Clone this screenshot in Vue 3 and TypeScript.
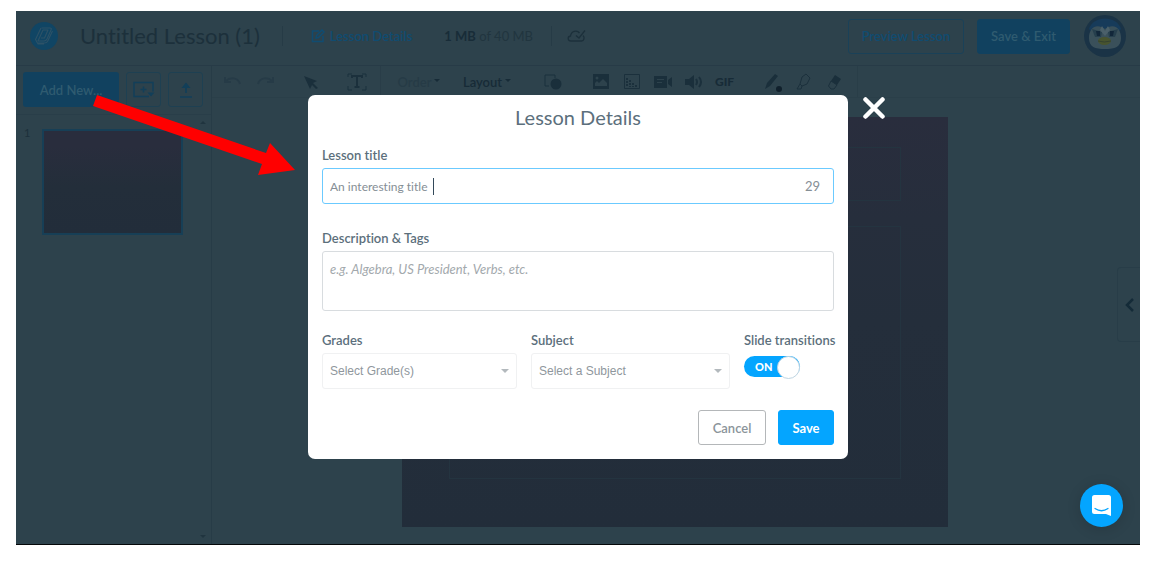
<script setup lang="ts">
import { ref } from 'vue'

const title = ref('An interesting title')
const description = ref('')
const transitions = ref(true)
</script>

<template>
  <div class="stage">
    <div class="editor">
      <header class="topbar">
        <svg class="logo" viewBox="0 0 28 28" aria-hidden="true">
          <circle cx="14" cy="14" r="14" fill="#104564" />
          <g fill="none" stroke="#2d5267" stroke-width="1.1" stroke-linejoin="round">
            <path d="M11.500 6H20q2 0 1 2l-4 9q-1 2-3 2H8L13 8h5l-3.500 8H11" />
            <path d="M22.500 9l-5 10.500q-1 1.500-3 1.500H7.500M11 6L5.500 17.500 8 22h6" />
          </g>
        </svg>
        <h1>Untitled Lesson (1)</h1>
        <span class="rule"></span>
        <a href="#" class="details">
          <svg viewBox="0 0 14 14" width="14" height="14" fill="none" stroke="currentColor" stroke-width="1.500">
            <path d="M12 7v5.500H1.500V2H8" />
            <path d="M5 9l.500-2.500L11 1l2 2-5.500 5.500z" />
          </svg>
          Lesson Details
        </a>
        <span class="usage"><b>1 MB</b> of 40 MB</span>
        <span class="rule usage-rule"></span>
        <svg class="cloud" viewBox="0 0 19 14" fill="none" stroke="#1c303b" stroke-width="1.300">
          <path d="M16 6.500c2 2 1 5.500-1.500 5.500H4C.5 12 .2 7.500 3.500 7 4 2 10 .5 12.500 4" />
          <path d="M9 6.500L12 9l6-7.500" />
        </svg>
        <button class="preview" type="button">Preview Lesson</button>
        <button class="exit" type="button">Save &amp; Exit</button>
        <svg class="avatar" viewBox="0 0 42 42" role="img" aria-label="Profile">
          <circle cx="21" cy="21" r="21" fill="#1a3346" />
          <path d="M5 14C9 0 33 0 37 14l-4 4H9z" fill="#173b5a" />
          <path d="M21 14C13 8 5 12 5 23c0 9 6 11 16 11s16-2 16-11c0-11-8-15-16-9z" fill="#3a505a" />
          <path d="M8 14l10 3-1 5h-6zM34 14l-10 3 1 5h6z" fill="#263f4d" />
          <path d="M18 11l3 5 3-5 2 4-5 6-5-6z" fill="#4b606a" />
          <path d="M12 16h4v5h-3zM26 16h4l-1 5h-3z" fill="#12273a" />
          <ellipse cx="20.500" cy="26" rx="6.500" ry="4" fill="#48542f" />
          <path d="M14 26q6 2 13 0" fill="none" stroke="#34422f" />
        </svg>
      </header>

      <div class="body">
        <aside class="sidebar">
          <div class="actions">
            <button class="add" type="button">Add New...</button>
            <button class="square" type="button" aria-label="Add slide">
              <svg viewBox="0 0 22 18" width="22" height="18" fill="none" stroke="currentColor" stroke-width="1.500">
                <path d="M16 15.500H1v-14h19v9M10.500 5.500v6M7.500 8.500h6" />
                <path d="M14.500 11.500h7l-3.500 4z" fill="currentColor" stroke="none" />
              </svg>
            </button>
            <button class="square" type="button" aria-label="Upload">
              <svg viewBox="0 0 14 16" width="14" height="16" fill="none" stroke="currentColor" stroke-width="1.700">
                <path d="M7 11V4M1 15h12" />
                <path d="M2.500 6L7 .5 11.500 6z" fill="currentColor" stroke="none" />
              </svg>
            </button>
          </div>
          <div class="slides">
            <span class="number">1</span>
            <div class="thumb"></div>
            <div class="scroll"><i class="up"></i><i class="down"></i></div>
          </div>
        </aside>

        <main class="work">
          <div class="toolbar">
            <div class="group history">
              <svg width="20" height="12" viewBox="0 0 20 12" class="faint"><path d="M2 1v5h6M3 5c4-4 12-4 14 3" /></svg>
              <svg width="20" height="12" viewBox="0 0 20 12" class="faint"><path d="M18 1v5h-6M17 5C13 1 5 1 3 8" /></svg>
            </div>
            <div class="group pointer">
              <svg width="14" height="14" viewBox="0 0 14 14"><path class="solid" d="M0 1l13 5-4 2 5 5-2 1-4-4-2 4z" /></svg>
              <svg width="20" height="18" viewBox="0 0 20 18">
                <path class="thin" d="M1 4V1h4M15 1h4v3M1 13v4h4M15 17h4v-4" />
                <path d="M5 5V3h10v2M10 3v11M7.500 14h5" />
              </svg>
            </div>
            <div class="group menus">
              <button type="button" class="muted">Order<i></i></button>
              <button type="button">Layout<i></i></button>
            </div>
            <div class="group shapes">
              <svg width="18" height="16" viewBox="0 0 18 16"><path class="thin" d="M5 12H1V1h10v3" /><circle class="solid" cx="12" cy="10" r="5.500" /></svg>
            </div>
            <div class="group media">
              <svg width="16" height="15" viewBox="0 0 16 15"><path class="solid" fill-rule="evenodd" d="M0 0h16v15H0zM2 12h12V9l-4-4-4 4-2-2-2 2zM4 2.500a1.500 1.500 0 100 3 1.500 1.500 0 000-3z" /></svg>
              <svg width="16" height="15" viewBox="0 0 16 15"><path class="thin" d="M.5.5h15v14H.500z" /><path class="dots" d="M3 4v9M6 6v7M9 9v4M12 11v2" /></svg>
              <svg width="18" height="12" viewBox="0 0 18 12"><path class="solid" fill-rule="evenodd" d="M0 0h13v12H0zM14 4l4-3v10l-4-3zM3 3v1h7V3zM3 6v1h5V6z" /></svg>
              <svg width="18" height="14" viewBox="0 0 18 14"><path class="solid" d="M0 4h4l5-4v14l-5-4H0z" /><path d="M11 4q2 3 0 6M14 2q4 5 0 10" /></svg>
              <span class="gif">GIF</span>
            </div>
            <div class="group pens">
              <svg width="18" height="20" viewBox="0 0 18 20"><path class="solid" d="M1 17l2-6L11 2l3 2-8 10z" /><circle class="dot" cx="15" cy="17" r="3" /></svg>
              <svg width="16" height="18" viewBox="0 0 16 18"><path class="thin" d="M4 11L6 4l4-3 4 4-3 6-5 2zM4 11l-3 5h4l1-3" /></svg>
              <svg width="16" height="16" viewBox="0 0 16 16"><path class="solid" d="M8 1l6 4-4 6-6-4z" /><path class="thin" d="M4 7l6 4-3 4H4L1.500 12z" /></svg>
            </div>
          </div>
          <div class="canvas">
            <div class="slide">
              <div class="slot heading"></div>
              <div class="slot content"></div>
            </div>
            <button class="drawer" type="button" aria-label="Open panel">
              <svg width="9" height="14" viewBox="0 0 9 14"><path d="M8 1L2 7l6 6" fill="none" stroke="#142b38" stroke-width="2.500" /></svg>
            </button>
          </div>
        </main>
      </div>
    </div>

    <div class="overlay">
      <div class="dialog-wrap">
        <form class="dialog" role="dialog" aria-labelledby="dialog-title" @submit.prevent>
          <h2 id="dialog-title">Lesson Details</h2>
          <label for="lesson-title">Lesson title</label>
          <div class="title-field">
            <input id="lesson-title" v-model="title" type="text" />
            <span class="caret"></span>
            <span class="count">29</span>
          </div>
          <label for="lesson-tags">Description &amp; Tags</label>
          <textarea id="lesson-tags" v-model="description" placeholder="e.g. Algebra, US President, Verbs, etc."></textarea>
          <div class="options">
            <div class="field">
              <label for="grades">Grades</label>
              <div class="picker"><select id="grades"><option>Select Grade(s)</option></select></div>
            </div>
            <div class="field">
              <label for="subject">Subject</label>
              <div class="picker"><select id="subject"><option>Select a Subject</option></select></div>
            </div>
            <div class="field">
              <label for="transitions">Slide transitions</label>
              <div class="switch" :class="{ on: transitions }">
                <input id="transitions" v-model="transitions" type="checkbox" />
                <span>{{ transitions ? 'ON' : 'OFF' }}</span>
              </div>
            </div>
          </div>
          <div class="buttons">
            <button class="cancel" type="button">Cancel</button>
            <button class="save" type="submit">Save</button>
          </div>
        </form>
        <button class="close" type="button" aria-label="Close">
          <svg width="22" height="22" viewBox="0 0 22 22"><path d="M2.500 2.500l17 17M19.500 2.500l-17 17" stroke="#fff" stroke-width="4.500" stroke-linecap="round" /></svg>
        </button>
        <svg class="arrow" width="204" height="82" viewBox="0 0 204 82" aria-hidden="true">
          <path d="M5 0L174 58l4-10 25 27-37 5 4-11L1 11z" fill="#f00" />
        </svg>
      </div>
    </div>

    <button class="chat" type="button" aria-label="Open chat">
      <svg width="20" height="22" viewBox="0 0 20 22">
        <path d="M2.500 0h14Q19 0 19 2.500V21l-5-2H2.500Q0 19 0 16.500v-14Q0 0 2.500 0z" fill="#fff" />
        <path d="M3 13.500q6.500 4.500 13 0" fill="none" stroke="#04a5ff" stroke-width="1.300" stroke-linecap="round" />
      </svg>
    </button>
  </div>
</template>

<style>
body {
  margin: 0;
  background: #fff;
}
</style>

<style scoped>
* {
  box-sizing: border-box;
}

.stage {
  position: relative;
  margin: 11px 22px 16px 16px;
  min-height: calc(100vh - 27px);
  display: flex;
  overflow: hidden;
  background: #2d424c;
  border-bottom: 1px solid #05080a;
  font-family: Lato, "Open Sans", sans-serif;
  font-size: 13px;
  font-variant-ligatures: none;
  color: #1c303b;
}

button,
input,
select,
textarea {
  font: inherit;
  font-variant-ligatures: none;
  margin: 0;
  padding: 0;
  color: inherit;
  background: none;
  border: 0;
  outline: 0;
}

svg {
  display: block;
  flex: none;
}

.editor {
  flex: 1;
  display: flex;
  flex-direction: column;
  min-width: 0;
}

.topbar {
  display: flex;
  align-items: center;
  height: 55px;
  padding: 0 14px 4px;
  border-bottom: 1px solid #273b47;
  white-space: nowrap;
}

.logo {
  width: 28px;
  height: 28px;
}

h1 {
  margin: 0 22px;
  font-size: 22px;
  font-weight: 400;
  line-height: 28px;
}

.rule {
  width: 1px;
  height: 20px;
  background: #263b46;
}

.details {
  display: flex;
  align-items: center;
  gap: 5px;
  margin: 0 32px 0 28px;
  color: #104c71;
  font-weight: 600;
  text-decoration: none;
}

.usage {
  color: #21353f;
}

.usage b {
  color: #182c38;
}

.usage-rule {
  margin: 0 15px 0 18px;
}

.cloud {
  width: 19px;
  height: 14px;
}

.preview,
.exit {
  height: 35px;
  border: 1px solid #1a4158;
  border-radius: 3px;
  color: #104c71;
  font-weight: 600;
}

.preview {
  width: 116px;
  margin-left: auto;
}

.exit {
  width: 93px;
  margin: 0 14px 0 13px;
  background: #11415f;
  border-color: #11415f;
  color: #2f5b70;
}

.avatar {
  width: 42px;
  height: 42px;
}

.body {
  flex: 1;
  display: flex;
}

.sidebar {
  width: 196px;
  display: flex;
  flex-direction: column;
  border-right: 1px solid #273c47;
}

.actions {
  display: flex;
  gap: 7px;
  padding: 6px 7px 7px;
  border-bottom: 1px solid #293e49;
}

.add {
  width: 96px;
  height: 35px;
  background: #11415f;
  border-radius: 3px;
  color: #2f5b70;
  font-weight: 600;
}

.square {
  display: flex;
  align-items: center;
  justify-content: center;
  width: 35px;
  height: 35px;
  border: 1px solid #1e4052;
  border-radius: 3px;
  color: #123f59;
}

.slides {
  flex: 1;
  display: flex;
}

.number {
  width: 26px;
  padding: 11px 0 0 8px;
  font-size: 11px;
}

.thumb {
  width: 141px;
  height: 106px;
  margin-top: 14px;
  border: 2px solid #173f56;
  background: linear-gradient(#292d3d 15%, #232e3a 55%, #222d3a);
}

.scroll {
  display: flex;
  flex-direction: column;
  justify-content: space-between;
  margin-left: auto;
  padding: 6px 5px;
}

.scroll i,
.menus i {
  border: 3px solid transparent;
}

.scroll .up {
  border-top: 0;
  border-bottom-color: #20343f;
}

.scroll .down {
  border-bottom: 0;
  border-top-color: #20343f;
}

.work {
  flex: 1;
  display: flex;
  flex-direction: column;
  min-width: 0;
}

.toolbar {
  display: flex;
  height: 32px;
  padding-left: 5px;
  border-bottom: 1px solid #2a3f49;
  color: #172b37;
}

.group {
  display: grid;
  grid-auto-flow: column;
  align-items: center;
  justify-items: center;
}

.group svg {
  fill: none;
  stroke: #1b303c;
  stroke-width: 2;
}

.group .faint {
  stroke: #263b47;
}

.group .solid,
.group .dot {
  fill: #1a2f3b;
  stroke: none;
}

.group .dot {
  fill: #10202c;
}

.group .thin {
  stroke-width: 1;
}

.group .dots {
  stroke-dasharray: 2 1;
}

.history {
  grid-auto-columns: 32px;
}

.pointer {
  grid-auto-columns: 46px;
  margin-left: 7px;
  border-right: 1px solid #293d48;
}

.menus {
  grid-auto-columns: 68px;
  margin-left: 4px;
}

.menus button {
  display: flex;
  gap: 3px;
  font-weight: 600;
}

.menus .muted {
  color: #263b46;
}

.menus i {
  height: 0;
  margin-top: 5px;
  border-bottom: 0;
  border-top-color: #172b37;
}

.shapes {
  grid-auto-columns: 64px;
}

.media {
  grid-auto-columns: 31px;
}

.gif {
  font-size: 12px;
  font-weight: 900;
}

.pens {
  grid-auto-columns: 31px;
  margin-left: 17px;
  padding-right: 7px;
  border-right: 1px solid #293e48;
}

.canvas {
  flex: 1;
  display: flex;
  align-items: center;
  justify-content: center;
  position: relative;
  padding: 1px 2px 0 0;
}

.slide {
  display: flex;
  flex-direction: column;
  gap: 25px;
  width: 546px;
  height: 410px;
  padding: 30px 47px 48px;
  background: linear-gradient(#292d3d, #262e3c 25%, #242e3b 50%, #222d3a);
}

.slot {
  border: 1px solid #243440;
}

.heading {
  height: 54px;
}

.content {
  flex: 1;
}

.drawer {
  position: absolute;
  right: 0;
  top: 169px;
  display: flex;
  align-items: center;
  justify-content: center;
  width: 23px;
  height: 75px;
  border: 1px solid #283d48;
  border-right: 0;
  border-radius: 4px 0 0 4px;
}

.overlay {
  position: absolute;
  inset: 0;
  display: flex;
  align-items: flex-start;
  justify-content: center;
  padding-top: 84px;
}

.dialog-wrap {
  position: relative;
  width: 540px;
}

.dialog {
  display: flex;
  flex-direction: column;
  padding: 8px 14px 14px;
  background: #fff;
  border-radius: 7px;
  color: #5c6f7c;
}

h2 {
  margin: 0 0 16px;
  font-size: 20px;
  font-weight: 400;
  line-height: 28px;
  text-align: center;
}

label {
  margin-bottom: 4px;
  font-weight: 600;
  line-height: 17px;
  white-space: nowrap;
}

.title-field {
  position: relative;
  display: flex;
  align-items: center;
  height: 36px;
  margin-bottom: 26px;
  padding: 0 13px 0 7px;
  border: 1px solid #6bcaff;
  border-radius: 3px;
  color: #858e95;
}

.title-field input {
  flex: 1;
  min-width: 0;
  font-size: 12px;
}

.caret {
  position: absolute;
  left: 110px;
  top: 9px;
  width: 1px;
  height: 17px;
  background: #33495a;
}

textarea {
  height: 60px;
  margin-bottom: 21px;
  padding: 8px 7px;
  border: 1px solid #d8dcdf;
  border-radius: 3px;
  line-height: 18px;
  resize: none;
}

textarea::placeholder {
  color: #a3a9ad;
  font-style: italic;
}

.options {
  display: grid;
  grid-template-columns: 195fr 199fr 90px;
  gap: 14px;
}

.field {
  display: flex;
  flex-direction: column;
}

.picker {
  position: relative;
  display: flex;
}

.picker::after {
  content: "";
  position: absolute;
  right: 8px;
  top: 16px;
  border: 4px solid transparent;
  border-top-color: #b3b9bd;
  border-bottom: 0;
  pointer-events: none;
}

select {
  flex: 1;
  height: 36px;
  padding: 0 7px;
  appearance: none;
  border: 1px solid #f0f1f2;
  border-radius: 3px;
  color: #8f979d;
  font-family: "Liberation Sans", sans-serif;
  font-size: 12px;
}

.switch {
  position: relative;
  display: flex;
  align-items: center;
  width: 56px;
  height: 21px;
  margin-top: 3px;
  padding-left: 11px;
  border-radius: 11px;
  background: #b3bcc2;
  color: #fff;
  font-size: 11px;
  font-weight: 900;
}

.switch.on {
  background: #04a5ff;
}

.switch input {
  position: absolute;
  inset: 0;
  width: 100%;
  height: 100%;
  appearance: none;
}

.switch::after {
  content: "";
  position: absolute;
  right: 0;
  top: 0;
  width: 21px;
  height: 21px;
  border: 1px solid #bfd5e2;
  border-radius: 50%;
  background: #fff;
  pointer-events: none;
}

.buttons {
  display: flex;
  justify-content: flex-end;
  gap: 12px;
  margin-top: 21px;
}

.cancel,
.save {
  width: 68px;
  height: 35px;
  border: 1px solid #b4b7b9;
  border-radius: 3px;
  color: #8b949a;
  font-weight: 600;
}

.save {
  width: 56px;
  background: #04a5ff;
  border-color: #04a5ff;
  color: #fff;
  font-weight: 700;
}

.close {
  position: absolute;
  left: calc(100% + 15px);
  top: 2px;
}

.arrow {
  position: absolute;
  right: calc(100% + 12px);
  top: 0;
  pointer-events: none;
}

.chat {
  position: absolute;
  right: 17px;
  bottom: 17px;
  display: flex;
  align-items: center;
  justify-content: center;
  width: 43px;
  height: 43px;
  border-radius: 50%;
  background: #04a5ff;
  box-shadow: 0 2px 14px #00000026;
}
</style>
